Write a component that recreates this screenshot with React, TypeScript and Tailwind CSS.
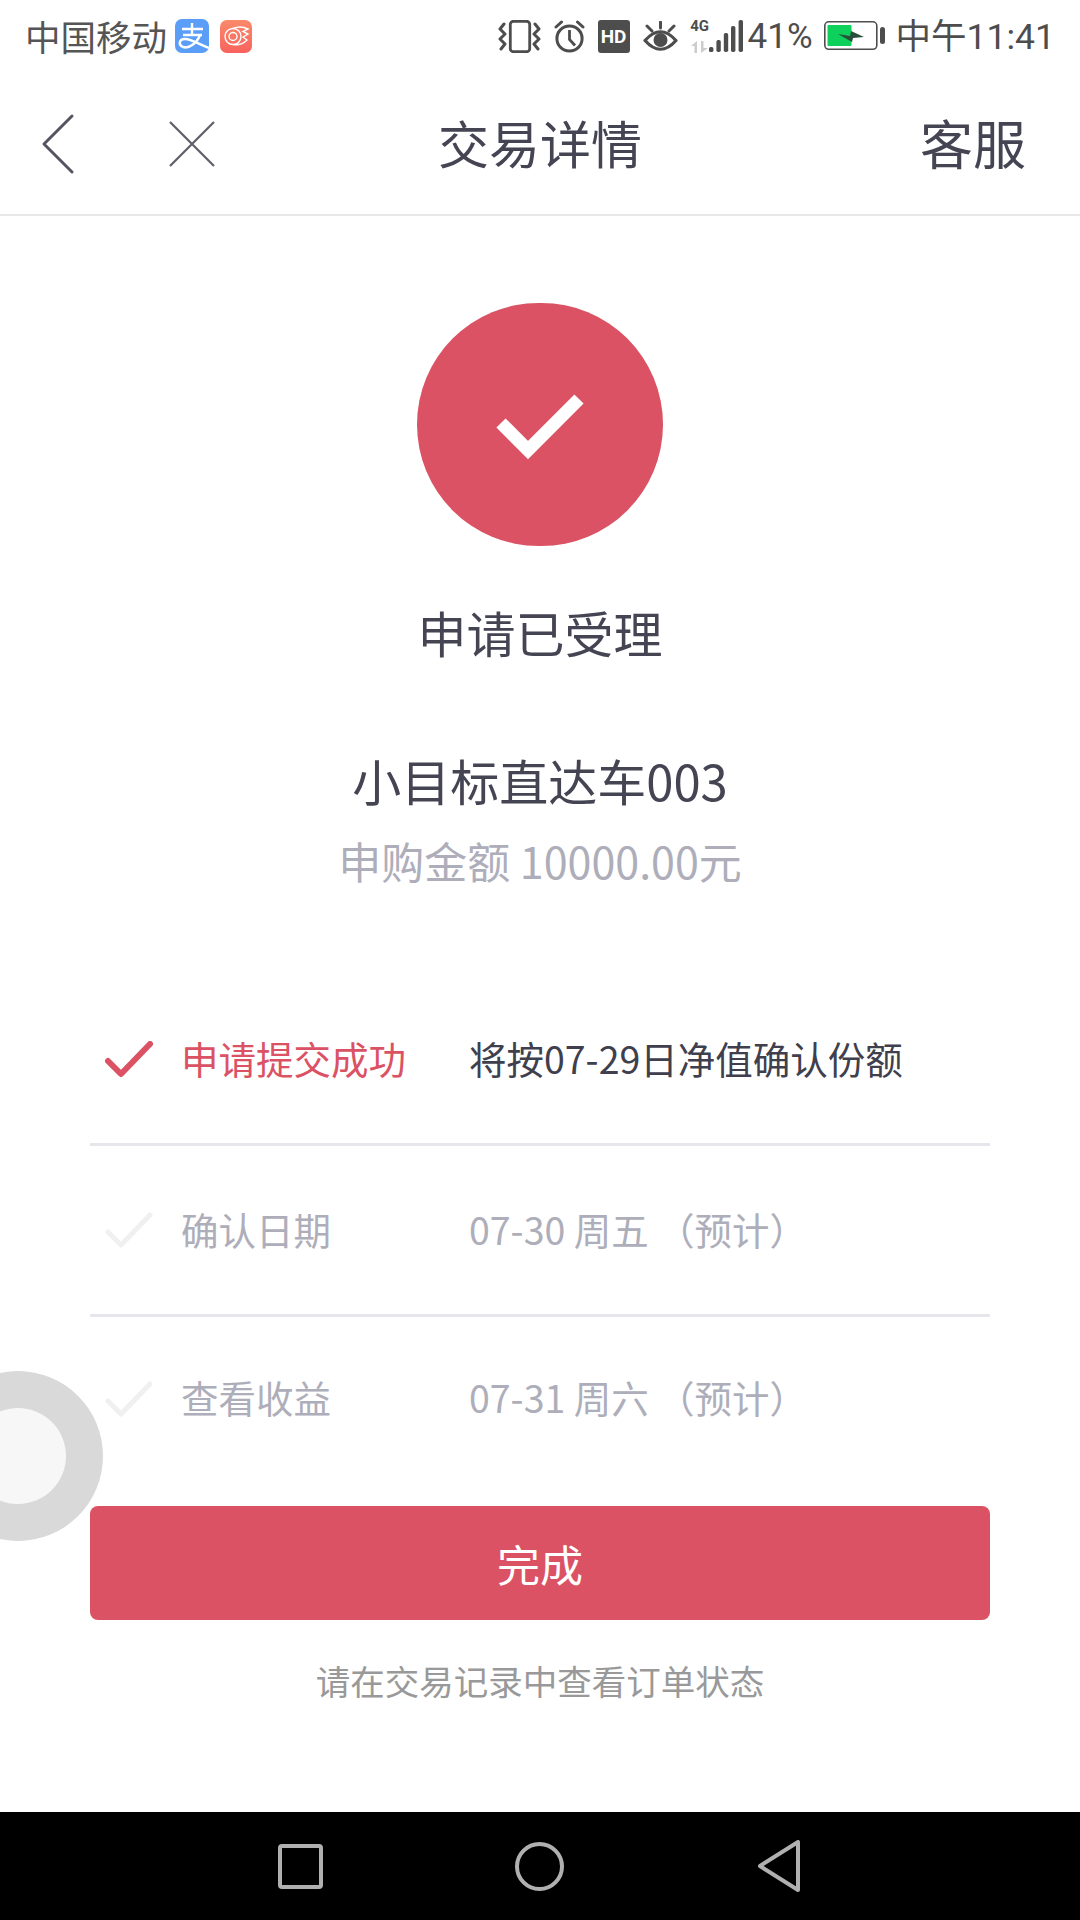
import React from 'react';

const cjk = "font-['Noto_Sans_CJK_SC','Noto_Sans',sans-serif]";

const StatusIcons = () => (
  <div className="flex items-center">
    <svg width="43" height="33" viewBox="0 0 43 33" fill="none" stroke="#4d4d4d">
      <rect x="12.3" y="1.3" width="19.4" height="30.4" rx="3" strokeWidth="2.8" />
      <path d="M6 4 L2 9 L7 14 L2 19 L7 24 L3 29" strokeWidth="3" strokeLinejoin="round" strokeLinecap="round" />
      <path d="M37 4 L41 9 L36 14 L41 19 L36 24 L40 29" strokeWidth="3" strokeLinejoin="round" strokeLinecap="round" />
    </svg>
    <svg width="33" height="33" viewBox="0 0 33 33" className="ml-[12px]" fill="none" stroke="#4d4d4d">
      <circle cx="16.5" cy="18.5" r="12.6" strokeWidth="3" />
      <path d="M16.5 10 V19.5 L22 25.5" strokeWidth="2.8" />
      <path d="M3 7 L8.5 2 M30 7 L24.5 2" strokeWidth="3" strokeLinecap="round" />
    </svg>
    <div className="ml-[12px] flex h-[33px] w-[32px] items-center justify-center rounded-[3px] bg-[#4d4d4d] font-['Roboto',sans-serif] text-[19px] leading-none font-bold text-white">HD</div>
    <svg width="35" height="30" viewBox="0 0 35 30" className="ml-[13px]" fill="none" stroke="#4d4d4d">
      <path d="M2 19.5 Q17.5 2 33 19.5 Q17.5 37 2 19.5 Z" strokeWidth="3.2" strokeLinejoin="round" />
      <circle cx="17.5" cy="19" r="7" fill="#4d4d4d" stroke="none" />
      <path d="M4 5 L9 10 M17.5 1 V7 M31 5 L26 10" strokeWidth="3" strokeLinecap="round" />
    </svg>
    <div className="ml-[13px] flex h-[33px] w-[18px] flex-col items-center justify-between">
      <span className="font-['Roboto',sans-serif] text-[15px] leading-[13px] font-bold text-[#4d4d4d]">4G</span>
      <svg width="17" height="12" viewBox="0 0 17 12" fill="#cccccc">
        <path d="M6 0 V12 H3.5 V5 H0 Z M10 0 H12.5 V7 H17 L10 12 Z" />
      </svg>
    </div>
    <svg width="34" height="33" viewBox="0 0 34 33" fill="#4d4d4d">
      <rect x="0" y="27" width="4.4" height="5" rx="1.6" />
      <rect x="7.4" y="20" width="4.4" height="12" rx="1.8" />
      <rect x="14.8" y="13" width="4.4" height="19" rx="1.8" />
      <rect x="22" y="6" width="4.4" height="26" rx="1.8" />
      <rect x="29.6" y="0" width="4.4" height="32" rx="1.8" />
    </svg>
    <span className="ml-[5px] font-['Roboto',sans-serif] text-[35px] leading-none text-[#4d4d4d]">41%</span>
    <svg width="61" height="30" viewBox="0 0 61 30" className="ml-[11px]" fill="none">
      <rect x="0.8" y="0.8" width="52" height="27.5" rx="4" stroke="#4d4d4d" strokeWidth="1.6" />
      <rect x="3.5" y="4" width="24" height="21" rx="1" fill="#0ed15c" />
      <path d="M14 13 L26 15 L27 10 L40 16 L29 17 L28 21 Z" fill="#2a4f3b" />
      <rect x="56" y="6" width="5" height="17" rx="2.5" fill="#4d4d4d" />
    </svg>
    <span className={`ml-[11px] ${cjk} text-[35.5px] leading-none text-[#4d4d4d]`}>
      中午<span className="font-['Roboto',sans-serif]">11:41</span>
    </span>
  </div>
);

const StatusBar = () => (
  <div className="flex h-[76px] items-center justify-between pr-[25px] pb-[4px] pl-[25px]">
    <div className="flex items-center">
      <span className={`${cjk} text-[35.5px] leading-none text-[#555555]`}>中国移动</span>
      <div className="ml-[8px] h-[34px] w-[34px] rounded-[7px] bg-[#5a9ef8]">
        <svg width="34" height="34" viewBox="0 0 34 34" fill="none" stroke="#fff" strokeWidth="2.4">
          <path d="M7 10 H28 M17 4 V16 M8 16 H27" />
          <path d="M25 16 C22 24 14 30 8 28 C3 26 4 20 10 20 C16 20 24 25 34 29" />
        </svg>
      </div>
      <div className="ml-[11px] h-[33px] w-[32px] rounded-[7px] bg-gradient-to-b from-[#f98a6a] to-[#f8615e]">
        <svg width="32" height="33" viewBox="0 0 32 33" fill="none" stroke="#fff" strokeWidth="1.4">
          <circle cx="13" cy="16.5" r="8" />
          <circle cx="13" cy="16.5" r="4" />
          <path d="M13 8.5 C19 6 24 7 28 9 L23 11.5 L28 14 L23 17 L27 20 C23 24 18 25.5 13 24.5" />
        </svg>
      </div>
    </div>
    <StatusIcons />
  </div>
);

const NavBar = () => (
  <div className="flex h-[140px] items-center border-b-[2px] border-[#e8e8e8] pb-[2px]">
    <div className="flex flex-1 items-center">
      <svg width="36" height="62" viewBox="0 0 36 62" fill="none" stroke="#555562" strokeWidth="3" strokeLinecap="round" strokeLinejoin="round" className="ml-[40px]">
        <path d="M32 3 L4 31 L32 59" />
      </svg>
      <svg width="48" height="48" viewBox="0 0 48 48" fill="none" stroke="#5f5f6b" strokeWidth="2.2" className="ml-[92px]">
        <path d="M2 2 L46 46 M46 2 L2 46" />
      </svg>
    </div>
    <h1 className={`mb-[3px] ${cjk} text-[51px] leading-none font-normal text-[#444453]`}>交易详情</h1>
    <div className="flex flex-1 justify-end">
      <span className={`mr-[54px] mb-[3px] ${cjk} text-[53px] leading-none text-[#444453]`}>客服</span>
    </div>
  </div>
);

const Check = ({ color, width }: { color: string; width: number }) => (
  <svg width="50" height="40" viewBox="0 0 50 40" fill="none" stroke={color} strokeWidth={width} strokeLinecap="round" strokeLinejoin="round">
    <path d="M3 20 L16 33 L45 3" />
  </svg>
);

const steps = [
  { label: '申请提交成功', info: '将按07-29日净值确认份额', done: true },
  { label: '确认日期', info: '07-30 周五 （预计）', done: false },
  { label: '查看收益', info: '07-31 周六 （预计）', done: false },
];

export default function App() {
  return (
    <div className={`relative flex h-[1920px] w-[1080px] flex-col overflow-hidden bg-white ${cjk}`}>
      <StatusBar />
      <NavBar />

      <main className="flex flex-1 flex-col items-center">
        <div className="mt-[87px] flex h-[243px] w-[246px] items-center justify-center rounded-full bg-[#da5263]">
          <svg width="90" height="70" viewBox="0 0 90 70" fill="none" stroke="#fff" strokeWidth="13">
            <path d="M6 33 L33 60 L84 9" />
          </svg>
        </div>

        <h2 className="mt-[53px] text-[49px] leading-[66px] font-normal text-[#444453]">申请已受理</h2>
        <p className="mt-[82px] text-[49px] leading-[66px] text-[#444453]">小目标直达车003</p>
        <p className="mt-[19px] text-[43px] leading-[56px] text-[#aeaeba]">申购金额 10000.00元</p>

        <div className="mt-[87px] w-[900px]">
          {steps.map((step, i) => (
            <div key={step.label} className={`flex items-center ${i < 2 ? 'h-[171px] border-b-[3px] border-[#e6e6ec]' : 'h-[163px]'}`}>
              <div className="mt-[4px] ml-[15px] w-[76px] shrink-0">
                <Check color={step.done ? '#da5263' : '#f0f0f0'} width={step.done ? 6 : 5} />
              </div>
              <span className={`mb-[3px] w-[288px] shrink-0 text-[37.5px] leading-none ${step.done ? 'text-[#da5263]' : 'text-[#aeaeba]'}`}>{step.label}</span>
              <span className={`mb-[3px] text-[37.5px] leading-none ${step.done ? 'text-[#3f3f4e]' : 'text-[#aeaeba]'}`}>{step.info}</span>
            </div>
          ))}
        </div>

        <button className="mt-[26px] h-[114px] w-[900px] rounded-[8px] bg-[#da5263] text-[43px] text-white">完成</button>
        <p className="mt-[38px] text-[34.5px] leading-[44px] text-[#999999]">请在交易记录中查看订单状态</p>
      </main>

      <nav className="flex h-[108px] items-center bg-black pl-[278px]">
        <div className="h-[45px] w-[45px] rounded-[4px] border-[4px] border-[#b0b0b0]" />
        <div className="ml-[192px] h-[49px] w-[49px] rounded-full border-[4px] border-[#b0b0b0]" />
        <svg width="44" height="52" viewBox="0 0 44 52" fill="none" stroke="#b0b0b0" strokeWidth="4" strokeLinejoin="round" className="ml-[193px]">
          <path d="M3 26 L41 2 V50 Z" />
        </svg>
      </nav>

      <div className="absolute top-[1371px] left-[-67px] flex h-[170px] w-[170px] items-center justify-center rounded-full bg-[#d9d9d9]">
        <div className="h-[96px] w-[96px] rounded-full bg-[#f7f7f7]" />
      </div>
    </div>
  );
}
